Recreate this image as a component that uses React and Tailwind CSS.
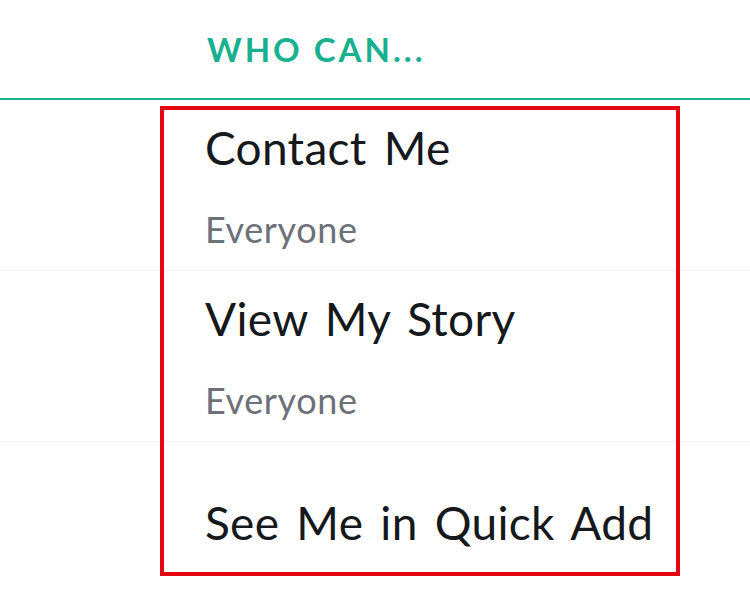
import React from "react";

const rows = [
  { title: "Contact Me", value: "Everyone" },
  { title: "View My Story", value: "Everyone" },
];

export default function App() {
  return (
    <div
      className="relative w-[750px] h-[600px] bg-white overflow-hidden"
      style={{ fontFamily: "Lato, 'Noto Sans', sans-serif" }}
    >
      {/* Section header */}
      <div className="h-[100px] border-b-2 border-[#19b08f] flex items-center pl-[207px]">
        <span className="text-[33px] font-bold tracking-[3px] text-[#19b08f] leading-none">
          WHO CAN...
        </span>
      </div>

      {rows.map((row) => (
        <div
          key={row.title}
          className="h-[171px] border-b border-[#f1f1f1] pl-[205px] pt-[25px]"
        >
          <div className="text-[46px] leading-none tracking-[0.3px] [word-spacing:5px] text-[#16191c]">
            {row.title}
          </div>
          <div className="mt-[40px] text-[36px] leading-none tracking-[0.6px] text-[#6c7079]">
            {row.value}
          </div>
        </div>
      ))}

      <div className="pl-[205px] pt-[58px]">
        <div className="text-[46px] leading-none tracking-[0.3px] [word-spacing:5px] text-[#16191c]">
          See Me in Quick Add
        </div>
      </div>

      {/* Highlight annotation */}
      <div className="absolute left-[160px] top-[106px] w-[520px] h-[470px] border-4 border-[#e30613]" />
    </div>
  );
}
